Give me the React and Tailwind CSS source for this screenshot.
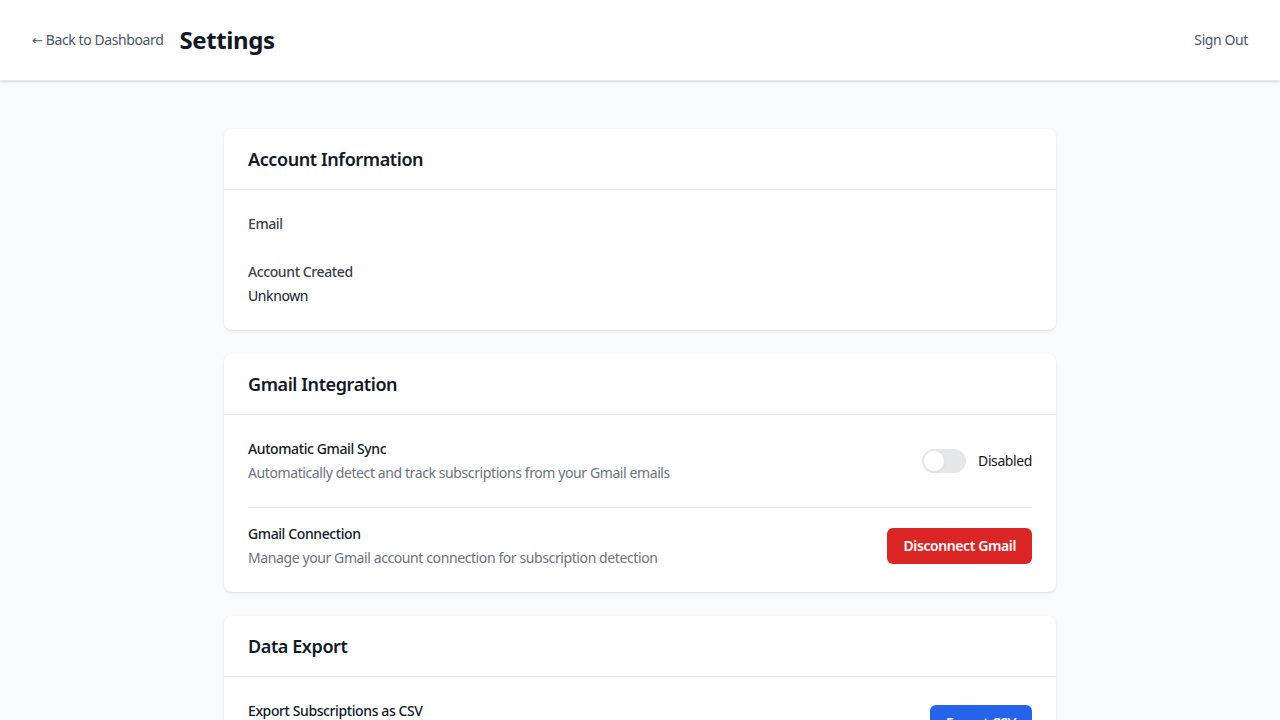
import React, { useState } from "react";

const Toggle = ({ enabled, onChange }) => (
  <button
    onClick={() => onChange(!enabled)}
    className={`relative inline-flex h-6 w-11 flex-shrink-0 items-center rounded-full transition-colors ${
      enabled ? "bg-[#2563eb]" : "bg-[#e5e7eb]"
    }`}
  >
    <span
      className={`inline-block h-5 w-5 rounded-full bg-white shadow ring-1 ring-[#e5e7eb] transition-transform ${
        enabled ? "translate-x-[22px]" : "translate-x-0.5"
      }`}
    />
  </button>
);

const Card = ({ title, children }) => (
  <div className="bg-white rounded-lg shadow">
    <div className="px-6 py-4 border-b border-[#e5e7eb]">
      <h2 className="text-lg font-semibold text-[#111827]">{title}</h2>
    </div>
    <div className="p-6">{children}</div>
  </div>
);

export default function App() {
  const [autoSync, setAutoSync] = useState(false);
  const user = { email: "", createdAt: null };

  return (
    <div
      className="min-h-screen bg-[#f9fafb] tracking-tight"
      style={{ fontFamily: '"Noto Sans", "Open Sans", sans-serif' }}
    >
      <header className="bg-white shadow-sm border-b border-[#e5e7eb]">
        <div className="px-8 py-6 flex items-center justify-between">
          <div className="flex items-center gap-4">
            <a href="#" className="text-sm text-[#4b5563] hover:text-gray-900">
              <span className="font-['DejaVu_Sans'] text-[13px]">←</span> Back to Dashboard
            </a>
            <h1 className="text-2xl font-bold text-[#111827]">Settings</h1>
          </div>
          <button className="text-sm text-[#4b5563] hover:text-gray-900">
            Sign Out
          </button>
        </div>
      </header>

      <main className="max-w-4xl mx-auto px-8 py-12 space-y-6">
        <Card title="Account Information">
          <div className="flex flex-col gap-6">
            <div>
              <p className="text-sm font-medium text-[#374151]">Email</p>
              <p className="mt-1 text-sm text-[#111827]">{user.email}</p>
            </div>
            <div>
              <p className="text-sm font-medium text-[#374151]">Account Created</p>
              <p className="mt-1 text-sm text-[#111827]">
                {user.createdAt ? new Date(user.createdAt).toLocaleDateString() : "Unknown"}
              </p>
            </div>
          </div>
        </Card>

        <Card title="Gmail Integration">
          <div className="flex items-center justify-between">
            <div>
              <h3 className="text-sm font-medium text-[#111827]">Automatic Gmail Sync</h3>
              <p className="mt-1 text-sm text-[#6b7280]">
                Automatically detect and track subscriptions from your Gmail emails
              </p>
            </div>
            <div className="flex items-center gap-3">
              <Toggle enabled={autoSync} onChange={setAutoSync} />
              <span className="text-sm text-[#111827]">
                {autoSync ? "Enabled" : "Disabled"}
              </span>
            </div>
          </div>
          <div className="mt-6 pt-4 border-t border-[#e5e7eb] flex items-center justify-between">
            <div>
              <h3 className="text-sm font-medium text-[#111827]">Gmail Connection</h3>
              <p className="mt-1 text-sm text-[#6b7280]">
                Manage your Gmail account connection for subscription detection
              </p>
            </div>
            <button className="bg-[#dc2626] text-white text-sm font-semibold px-4 py-2 rounded-md hover:bg-red-700">
              Disconnect Gmail
            </button>
          </div>
        </Card>

        <Card title="Data Export">
          <div className="flex items-center justify-between">
            <div>
              <h3 className="text-sm font-medium text-[#111827]">Export Subscriptions as CSV</h3>
              <p className="mt-1 text-sm text-[#6b7280]">
                Download all your subscription data in a spreadsheet-friendly format
              </p>
            </div>
            <button className="bg-[#2563eb] text-white text-sm font-semibold px-4 py-2 rounded-md hover:bg-blue-700">
              Export CSV
            </button>
          </div>
        </Card>
      </main>
    </div>
  );
}
